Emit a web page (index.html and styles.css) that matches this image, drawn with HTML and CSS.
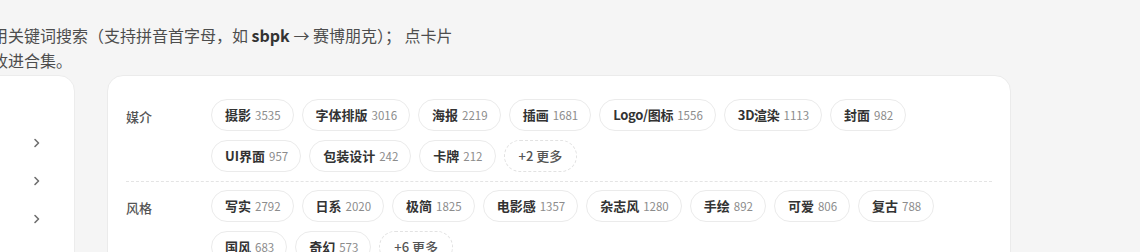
FILE: index.html
```html
<!DOCTYPE html>
<html lang="zh-CN">
<head>
<meta charset="utf-8">
<title>标签筛选</title>
<link rel="stylesheet" href="styles.css">
</head>
<body>
<div class="page">
  <p class="intro">用关键词搜索（支持拼音首字母，如 <b>sbpk</b> → 赛博朋克）； 点卡片收进合集。</p>
  <div class="layout">
    <aside class="side-card">
      <div class="side-item"><svg class="chev" viewBox="0 0 8 10" width="8" height="10"><path d="M2 1.5 L5.5 5 L2 8.5" fill="none" stroke="#6f6f6f" stroke-width="1.6" stroke-linecap="round" stroke-linejoin="round"/></svg></div>
      <div class="side-item"><svg class="chev" viewBox="0 0 8 10" width="8" height="10"><path d="M2 1.5 L5.5 5 L2 8.5" fill="none" stroke="#6f6f6f" stroke-width="1.6" stroke-linecap="round" stroke-linejoin="round"/></svg></div>
      <div class="side-item"><svg class="chev" viewBox="0 0 8 10" width="8" height="10"><path d="M2 1.5 L5.5 5 L2 8.5" fill="none" stroke="#6f6f6f" stroke-width="1.6" stroke-linecap="round" stroke-linejoin="round"/></svg></div>
    </aside>
    <section class="main-card">
      <div class="facet">
        <div class="facet-label">媒介</div>
        <div class="tags">
          <span class="tag"><span class="name">摄影</span><span class="count">3535</span></span>
          <span class="tag"><span class="name">字体排版</span><span class="count">3016</span></span>
          <span class="tag"><span class="name">海报</span><span class="count">2219</span></span>
          <span class="tag"><span class="name">插画</span><span class="count">1681</span></span>
          <span class="tag"><span class="name latin">Logo/图标</span><span class="count">1556</span></span>
          <span class="tag"><span class="name latin">3D渲染</span><span class="count">1113</span></span>
          <span class="tag"><span class="name">封面</span><span class="count">982</span></span>
          <span class="tag"><span class="name">UI界面</span><span class="count">957</span></span>
          <span class="tag"><span class="name">包装设计</span><span class="count">242</span></span>
          <span class="tag"><span class="name">卡牌</span><span class="count">212</span></span>
          <span class="tag more">+2 更多</span>
        </div>
      </div>
      <div class="facet">
        <div class="facet-label">风格</div>
        <div class="tags">
          <span class="tag"><span class="name">写实</span><span class="count">2792</span></span>
          <span class="tag"><span class="name">日系</span><span class="count">2020</span></span>
          <span class="tag"><span class="name">极简</span><span class="count">1825</span></span>
          <span class="tag"><span class="name">电影感</span><span class="count">1357</span></span>
          <span class="tag"><span class="name">杂志风</span><span class="count">1280</span></span>
          <span class="tag"><span class="name">手绘</span><span class="count">892</span></span>
          <span class="tag"><span class="name">可爱</span><span class="count">806</span></span>
          <span class="tag"><span class="name">复古</span><span class="count">788</span></span>
          <span class="tag"><span class="name">国风</span><span class="count">683</span></span>
          <span class="tag"><span class="name">奇幻</span><span class="count">573</span></span>
          <span class="tag more">+6 更多</span>
        </div>
      </div>
    </section>
  </div>
</div>
</body>
</html>
```
FILE: styles.css
```css
* { box-sizing: border-box; }
html, body { margin: 0; padding: 0; }
body {
  background: #f5f5f5;
  font-family: "Noto Sans CJK SC", "Noto Sans", sans-serif;
  color: #333;
}
.page {
  margin-left: -8px;
  padding-top: 23px;
}
.intro {
  margin: 0 0 2px 0;
  width: 468px;
  font-size: 16px;
  line-height: 25px;
  color: #4d4d4d;
}
.intro b { color: #333; font-weight: 700; }
.layout {
  display: grid;
  grid-template-columns: 83px 904px;
  column-gap: 32px;
  align-items: start;
}
.side-card {
  background: #fff;
  border: 1px solid #ececec;
  border-radius: 0 16px 16px 0;
  min-height: 400px;
  padding-top: 48px;
  padding-right: 33px;
}
.side-item {
  height: 38px;
  display: flex;
  align-items: center;
  justify-content: flex-end;
}
.chev { display: block; }
.main-card {
  background: #fff;
  border: 1px solid #ebebeb;
  border-radius: 16px;
  padding: 15px 18px;
  min-height: 400px;
}
.facet {
  display: flex;
  align-items: flex-start;
  padding: 8px 0 9px;
  border-bottom: 1px dashed #e4e4e4;
}
.facet-label {
  flex: none;
  width: 85px;
  padding-top: 2px;
  font-size: 13px;
  font-weight: 500;
  color: #555;
  line-height: 32px;
}
.tags {
  flex: 1;
  display: flex;
  flex-wrap: wrap;
  gap: 9px 8px;
}
.tag {
  display: inline-flex;
  align-items: baseline;
  height: 32px;
  padding: 5px 12px 5px 13px;
  border: 1px solid #ebebeb;
  border-radius: 16px;
  background: #fff;
  line-height: 20px;
  white-space: nowrap;
}
.tag .name {
  font-size: 13px;
  font-weight: 700;
  color: #333;
}
.tag .name.latin { letter-spacing: -0.3px; }
.tag .count {
  margin-left: 4px;
  font-size: 11.5px;
  color: #8c8c8c;
}
.tag.more {
  border-style: dashed;
  border-color: #e2e2e2;
  font-size: 13px;
  font-weight: 500;
  color: #555;
  padding: 5px 14px;
}
```
